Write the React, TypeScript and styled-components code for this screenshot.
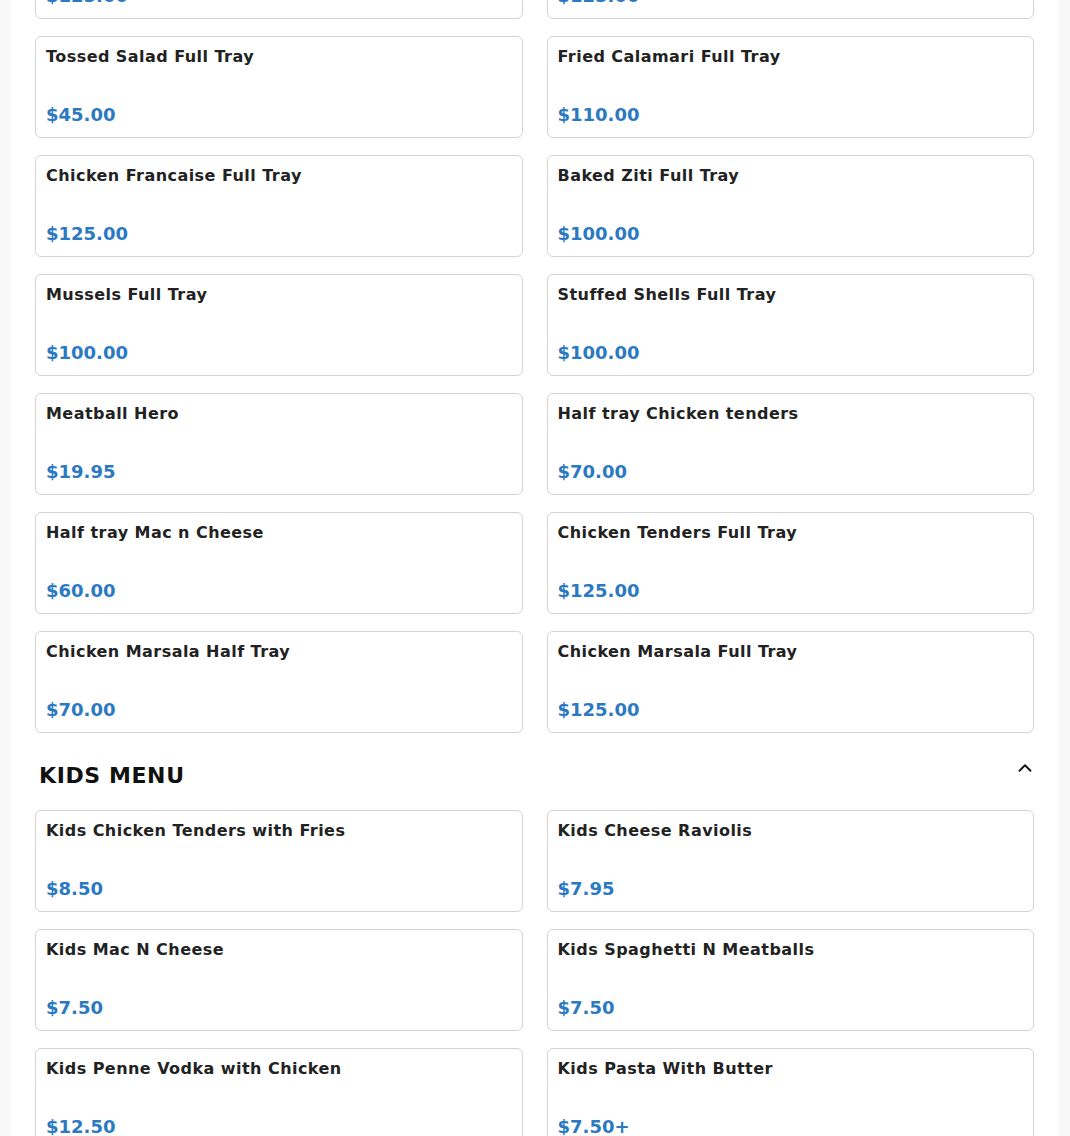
import styled, { createGlobalStyle } from "styled-components";
import { ChevronUp } from "lucide-react";

const GlobalStyle = createGlobalStyle`
  html, body {
    margin: 0;
    padding: 0;
    background: #f8f8f8;
    font-family: "DejaVu Sans", "Liberation Sans", sans-serif;
  }
  * {
    box-sizing: border-box;
  }
`;

type Item = { name: string; price: string };

const trays: Item[] = [
  { name: "Eggplant Parmigiana Full Tray", price: "$125.00" },
  { name: "Chicken Parmigiana Full Tray", price: "$125.00" },
  { name: "Tossed Salad Full Tray", price: "$45.00" },
  { name: "Fried Calamari Full Tray", price: "$110.00" },
  { name: "Chicken Francaise Full Tray", price: "$125.00" },
  { name: "Baked Ziti Full Tray", price: "$100.00" },
  { name: "Mussels Full Tray", price: "$100.00" },
  { name: "Stuffed Shells Full Tray", price: "$100.00" },
  { name: "Meatball Hero", price: "$19.95" },
  { name: "Half tray Chicken tenders", price: "$70.00" },
  { name: "Half tray Mac n Cheese", price: "$60.00" },
  { name: "Chicken Tenders Full Tray", price: "$125.00" },
  { name: "Chicken Marsala Half Tray", price: "$70.00" },
  { name: "Chicken Marsala Full Tray", price: "$125.00" },
];

const kids: Item[] = [
  { name: "Kids Chicken Tenders with Fries", price: "$8.50" },
  { name: "Kids Cheese Raviolis", price: "$7.95" },
  { name: "Kids Mac N Cheese", price: "$7.50" },
  { name: "Kids Spaghetti N Meatballs", price: "$7.50" },
  { name: "Kids Penne Vodka with Chicken", price: "$12.50" },
  { name: "Kids Pasta With Butter", price: "$7.50+" },
];

export default function App() {
  return (
    <>
      <GlobalStyle />
      <Page>
        <ItemGrid $offset={-83}>
          {trays.map((item) => (
            <Card key={item.name}>
              <ItemName>{item.name}</ItemName>
              <Price>{item.price}</Price>
            </Card>
          ))}
        </ItemGrid>
        <SectionHeader>
          <SectionTitle>KIDS MENU</SectionTitle>
          <Toggle aria-label="Collapse section">
            <ChevronUp size={22} strokeWidth={2} />
          </Toggle>
        </SectionHeader>
        <ItemGrid>
          {kids.map((item) => (
            <Card key={item.name}>
              <ItemName>{item.name}</ItemName>
              <Price>{item.price}</Price>
            </Card>
          ))}
        </ItemGrid>
      </Page>
    </>
  );
}

const Page = styled.main`
  margin: 0 12px 0 11px;
  padding: 0 24px 40px;
  background: #ffffff;
  min-height: 1136px;
  overflow: hidden;
`;

const ItemGrid = styled.div<{ $offset?: number }>`
  display: grid;
  grid-template-columns: 1fr 1fr;
  gap: 17px 24px;
  margin-top: ${(p) => p.$offset ?? 0}px;
`;

const Card = styled.div`
  height: 102px;
  display: flex;
  flex-direction: column;
  justify-content: space-between;
  padding: 9px 10px 9px;
  border: 1px solid #d4d4d4;
  border-radius: 6px;
  background: #ffffff;
`;

const ItemName = styled.h3`
  margin: 0;
  font-size: 16px;
  line-height: 22px;
  font-weight: 700;
  letter-spacing: 0.45px;
  color: #222222;
`;

const Price = styled.div`
  font-size: 18px;
  line-height: 26px;
  font-weight: 700;
  color: #2b79c2;
`;

const SectionHeader = styled.div`
  display: flex;
  justify-content: space-between;
  align-items: flex-start;
  padding: 26px 0 0 4px;
  margin-bottom: 17px;
`;

const SectionTitle = styled.h2`
  margin: 0;
  font-size: 22px;
  line-height: 34px;
  font-weight: 700;
  letter-spacing: 0.6px;
  color: #111111;
`;

const Toggle = styled.button`
  display: flex;
  align-items: center;
  justify-content: center;
  margin: -2px -2px 0 0;
  padding: 0;
  border: 0;
  background: none;
  color: #111111;
  cursor: pointer;
`;
